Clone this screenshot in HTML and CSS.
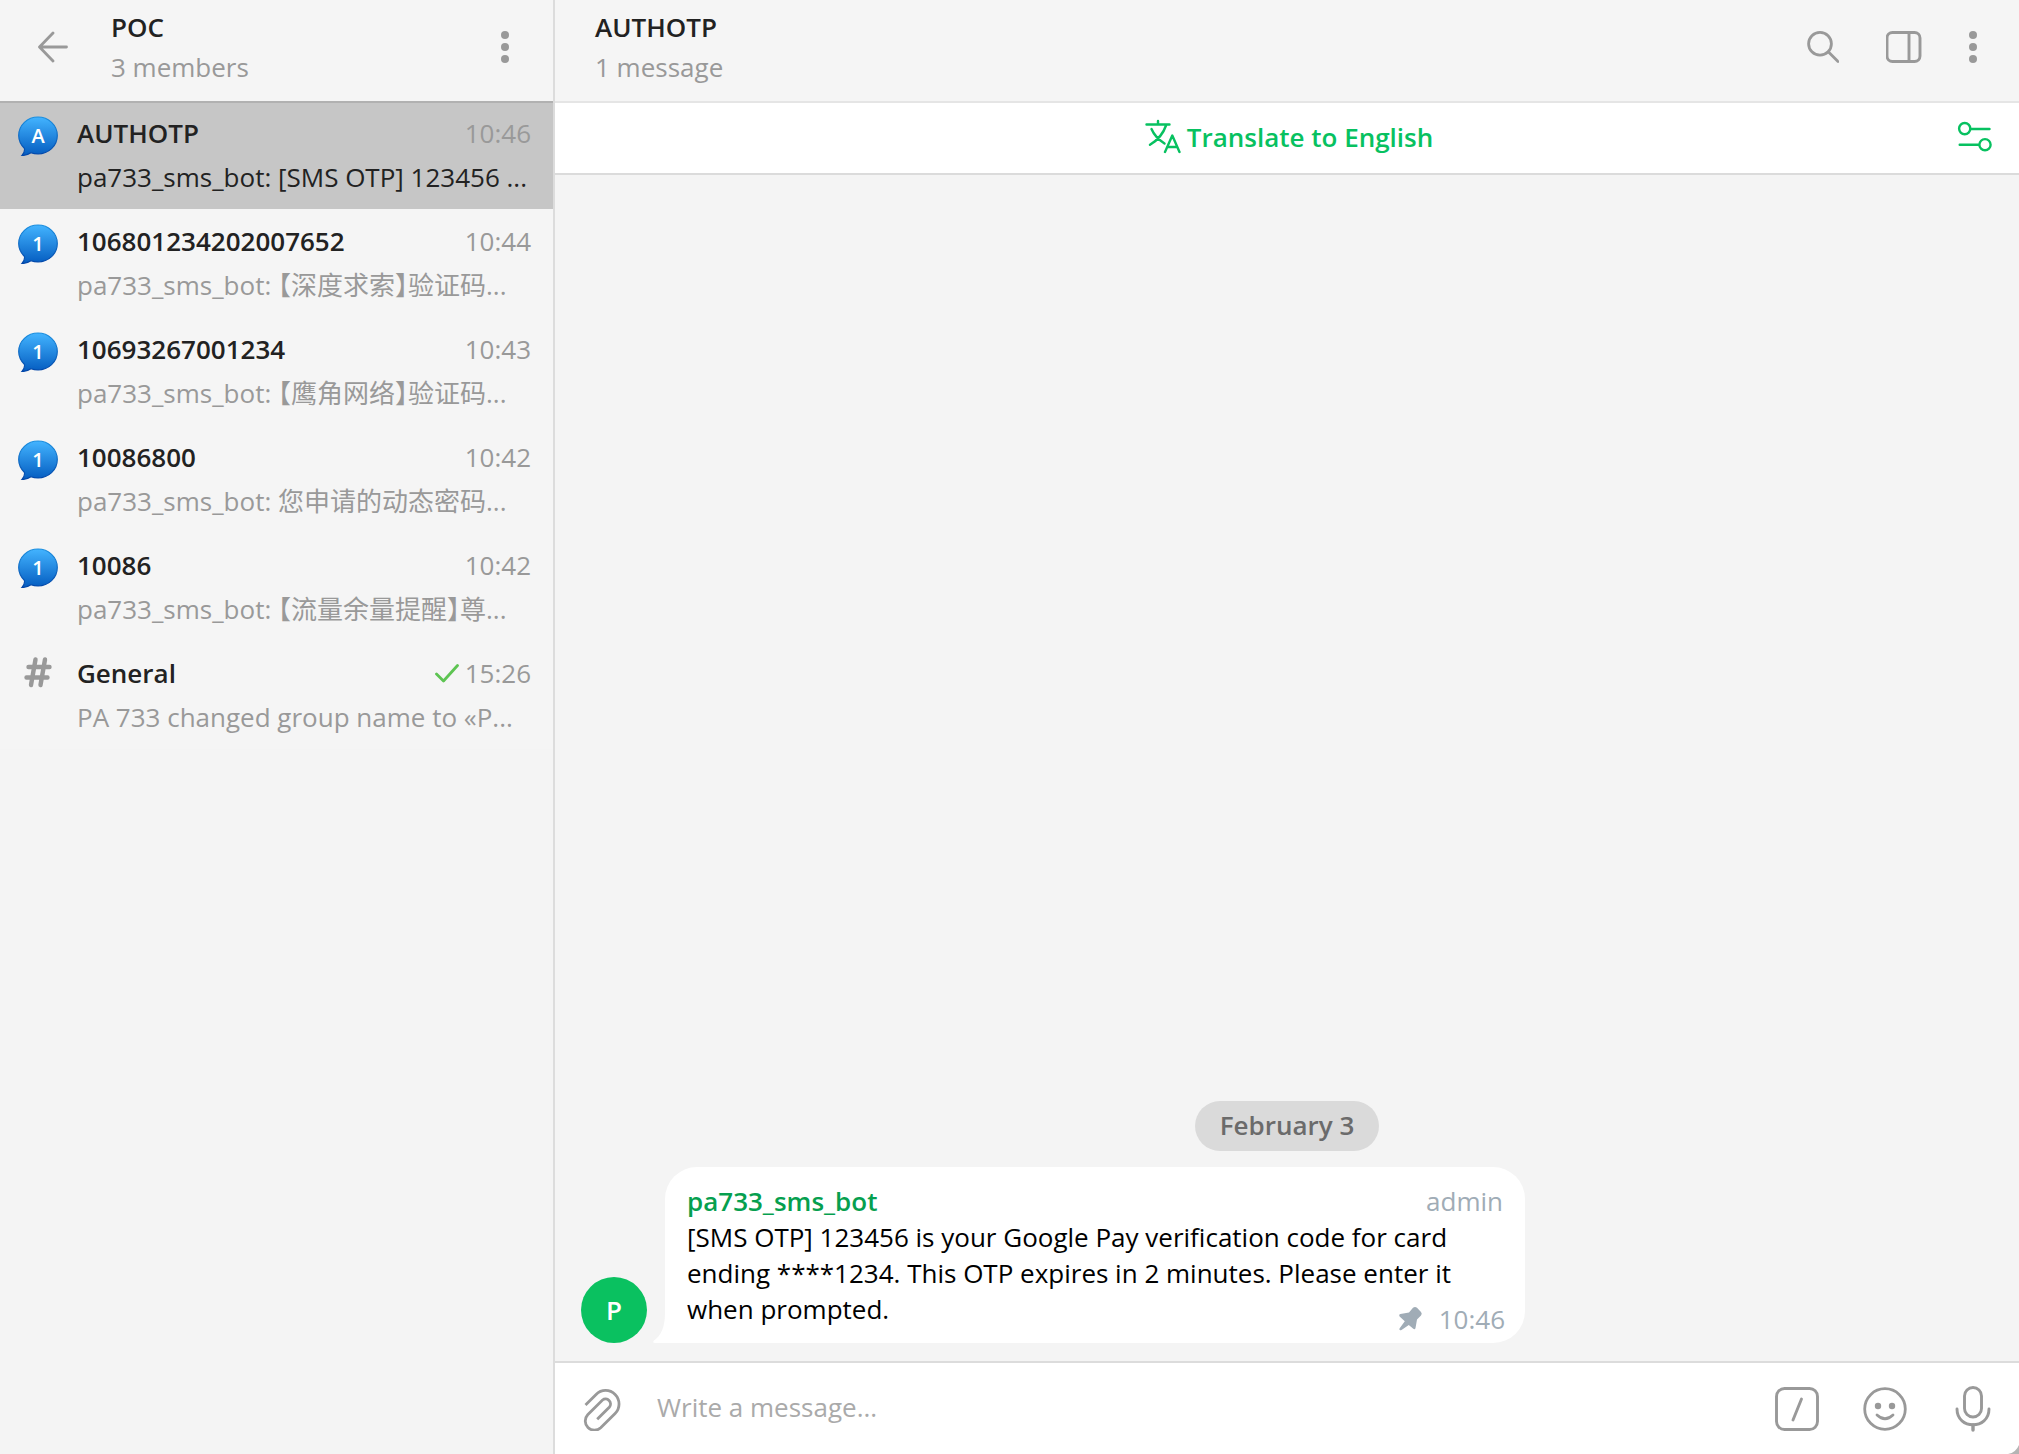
FILE: index.html
```html
<!DOCTYPE html>
<html lang="en">
<head>
<meta charset="utf-8">
<meta name="viewport" content="width=device-width, initial-scale=1">
<title>POC – AUTHOTP</title>
<link rel="stylesheet" href="styles.css">
</head>
<body>
<svg class="defs" aria-hidden="true">
  <defs>
    <linearGradient id="topic-fill" x1="0" y1="0" x2="0" y2="1">
      <stop offset="0" stop-color="#43b4ff"/>
      <stop offset="1" stop-color="#045cc0"/>
    </linearGradient>
    <linearGradient id="topic-edge" x1="0" y1="0" x2="0" y2="1">
      <stop offset="0" stop-color="#1b8fe0"/>
      <stop offset="1" stop-color="#0346a8"/>
    </linearGradient>
    <symbol id="topic" viewBox="0 0 40 40">
      <path d="M20 1C30.500 1 39.300 9 39.300 19.500C39.300 30 30.500 38 20 38C17.500 38 15 37.600 13 36.800C10.500 38.600 7.500 39.400 4 39.500C6 37.500 6.800 35 6.500 32.500C3 29 .700 24.500 .700 19.500C.700 9 9.500 1 20 1Z" fill="url(#topic-fill)" stroke="url(#topic-edge)" stroke-width="1.200"/>
    </symbol>
  </defs>
</svg>
<div class="app">
  <aside class="sidebar">
    <header class="bar sidebar-bar">
      <button class="icon-btn" aria-label="Back">
        <svg width="30" height="32" viewBox="0 0 30 32"><path d="M28.500 16H2M15 2L1.500 16L15 30" fill="none" stroke="#999" stroke-width="2.800" stroke-linecap="round" stroke-linejoin="round"/></svg>
      </button>
      <div class="titles">
        <h1 class="title">POC</h1>
        <p class="subtitle">3 members</p>
      </div>
      <button class="icon-btn" aria-label="Group menu">
        <svg width="8" height="32" viewBox="0 0 8 32" fill="#999"><circle cx="4" cy="4" r="4"/><circle cx="4" cy="16" r="4"/><circle cx="4" cy="28" r="4"/></svg>
      </button>
    </header>
    <nav aria-label="Topics">
      <ul class="topics">
        <li><a class="topic topic-active" href="#authotp">
          <svg class="topic-icon" viewBox="0 0 40 40"><use href="#topic"/><text class="topic-letter" x="20" y="27">A</text></svg>
          <span class="topic-name">AUTHOTP</span><span class="topic-time">10:46</span>
          <span class="topic-preview">pa733_sms_bot: [SMS OTP] 123456 ...</span>
        </a></li>
        <li><a class="topic" href="#106801234202007652">
          <svg class="topic-icon" viewBox="0 0 40 40"><use href="#topic"/><text class="topic-letter" x="20" y="27">1</text></svg>
          <span class="topic-name">106801234202007652</span><span class="topic-time">10:44</span>
          <span class="topic-preview" lang="zh-CN">pa733_sms_bot: 【深度求索】验证码...</span>
        </a></li>
        <li><a class="topic" href="#10693267001234">
          <svg class="topic-icon" viewBox="0 0 40 40"><use href="#topic"/><text class="topic-letter" x="20" y="27">1</text></svg>
          <span class="topic-name">10693267001234</span><span class="topic-time">10:43</span>
          <span class="topic-preview" lang="zh-CN">pa733_sms_bot: 【鹰角网络】验证码...</span>
        </a></li>
        <li><a class="topic" href="#10086800">
          <svg class="topic-icon" viewBox="0 0 40 40"><use href="#topic"/><text class="topic-letter" x="20" y="27">1</text></svg>
          <span class="topic-name">10086800</span><span class="topic-time">10:42</span>
          <span class="topic-preview" lang="zh-CN">pa733_sms_bot: 您申请的动态密码...</span>
        </a></li>
        <li><a class="topic" href="#10086">
          <svg class="topic-icon" viewBox="0 0 40 40"><use href="#topic"/><text class="topic-letter" x="20" y="27">1</text></svg>
          <span class="topic-name">10086</span><span class="topic-time">10:42</span>
          <span class="topic-preview" lang="zh-CN">pa733_sms_bot: 【流量余量提醒】尊...</span>
        </a></li>
        <li><a class="topic" href="#general">
          <svg class="topic-icon" viewBox="0 0 40 40"><path d="M17.500 3.500L13 29M27 3.500L22.500 29M10.500 11H31.500M8.500 21.500H29.500" fill="none" stroke="#999" stroke-width="4.400" stroke-linecap="round"/></svg>
          <span class="topic-name">General</span><span class="topic-time"><svg class="check" width="24" height="20" viewBox="0 0 24 20"><path d="M1.500 11L8.500 18L22.500 2.500" fill="none" stroke="#5dc452" stroke-width="2.800" stroke-linecap="round" stroke-linejoin="round"/></svg>15:26</span>
          <span class="topic-preview">PA 733 changed group name to «P...</span>
        </a></li>
      </ul>
    </nav>
  </aside>

  <main class="chat">
    <header class="bar chat-bar">
      <div class="titles">
        <h2 class="title">AUTHOTP</h2>
        <p class="subtitle">1 message</p>
      </div>
      <button class="icon-btn" aria-label="Search">
        <svg width="32" height="32" viewBox="0 0 32 32"><g fill="none" stroke="#999" stroke-width="2.800" stroke-linecap="round"><circle cx="13" cy="12.800" r="11.400"/><path d="M21.500 21L31 30.500"/></g></svg>
      </button>
      <button class="icon-btn" aria-label="Toggle side panel">
        <svg width="36" height="32" viewBox="0 0 36 32"><g fill="none" stroke="#999" stroke-width="2.900"><rect x="1" y="1.500" width="33" height="29" rx="5.500"/><path d="M23 2V30"/></g></svg>
      </button>
      <button class="icon-btn" aria-label="Topic menu">
        <svg width="8" height="32" viewBox="0 0 8 32" fill="#999"><circle cx="4" cy="4" r="4"/><circle cx="4" cy="16" r="4"/><circle cx="4" cy="28" r="4"/></svg>
      </button>
    </header>

    <div class="translate-bar">
      <button class="translate">
        <svg width="36" height="36" viewBox="0 0 36 36"><path d="M1.500 5.500H24.500M13 2V5M6.500 10C9 16 14 21 19.500 24.500M21 6.500C18 15.500 12 21.500 5 25.800M20 33L27.300 16.500L34.500 33M22.500 28H32" fill="none" stroke="#07c160" stroke-width="2.400" stroke-linecap="round" stroke-linejoin="round"/></svg>
        Translate to English
      </button>
      <button class="icon-btn translate-options" aria-label="Translation settings">
        <svg width="36" height="36" viewBox="0 0 36 36"><g fill="none" stroke="#07c160" stroke-width="2.400" stroke-linecap="round"><circle cx="7.700" cy="9.600" r="5.600"/><path d="M14 10H32.500M2.700 25.700H21.500"/><circle cx="28" cy="25.700" r="5.600"/></g></svg>
      </button>
    </div>

    <section class="history" aria-label="Messages">
      <p class="date">February 3</p>
      <article class="message">
        <span class="avatar">P</span>
        <div class="bubble">
          <svg class="tail" width="14" height="30" viewBox="0 0 14 30"><path d="M13 0C13 14 9 23 2 27.500Q0 30 3 30H14V0Z" fill="#fff"/></svg>
          <div class="bubble-head"><span class="sender">pa733_sms_bot</span><span class="role">admin</span></div>
          <p class="bubble-text">[SMS OTP] 123456 is your Google Pay verification code for card ending ****1234. This OTP expires in 2 minutes. Please enter it when prompted.
            <span class="meta">
              <svg width="26" height="26" viewBox="0 0 26 26"><path d="M16 1.800Q18 .200 20 1.800L24 6Q25.500 7.500 24 9.500L20 13.500L18.500 22Q18 24 16.300 22.800L11.800 19L4.500 24Q1.800 25 2.500 22.500L7.800 15.300L2.600 10.500Q1.500 8.500 3.500 8L12 6.500Z" fill="#a0acb6"/></svg>
              <time>10:46</time>
            </span>
          </p>
        </div>
      </article>
    </section>

    <form class="composer">
      <button type="button" class="icon-btn" aria-label="Attach file">
        <svg width="38" height="44" viewBox="0 0 38 44"><path d="M2.500 18L13.100 7.400A13.400 13.400 0 0 1 32.100 26.400L17.700 40.800A9.200 9.200 0 0 1 4.700 27.800L19.500 13A5 5 0 0 1 26.500 20L14.200 32.300" fill="none" stroke="#999" stroke-width="2.800"/></svg>
      </button>
      <input class="composer-input" type="text" placeholder="Write a message..." aria-label="Write a message">
      <button type="button" class="icon-btn" aria-label="Bot commands">
        <svg width="44" height="44" viewBox="0 0 44 44"><g fill="none" stroke="#999" stroke-width="2.900" stroke-linecap="round"><rect x="1.500" y="1.500" width="41" height="41" rx="8"/><path d="M26.500 12L18 33"/></g></svg>
      </button>
      <button type="button" class="icon-btn" aria-label="Emoji">
        <svg width="44" height="44" viewBox="0 0 44 44"><g fill="none" stroke="#999" stroke-width="2.800" stroke-linecap="round"><circle cx="22" cy="22" r="20.300"/><path d="M14 28Q22 35.500 30 28"/></g><circle cx="15" cy="19" r="3.200" fill="#999"/><circle cx="29" cy="19" r="3.200" fill="#999"/></svg>
      </button>
      <button type="button" class="icon-btn" aria-label="Record voice message">
        <svg width="44" height="46" viewBox="0 0 44 46"><g fill="none" stroke="#999" stroke-width="2.900" stroke-linecap="round"><rect x="13.500" y="1.500" width="17" height="29.500" rx="8.500"/><path d="M6 23C6 44 38 44 38 23"/><path d="M22 39V44" stroke-width="3.400"/></g></svg>
      </button>
    </form>
  </main>
</div>
<svg class="window-corner" width="12" height="10" viewBox="0 0 12 10" aria-hidden="true"><path d="M12 1V10H1Q9 8.500 12 1Z" fill="#b4b4b4"/></svg>
</body>
</html>
```
FILE: styles.css
```css
* {
  box-sizing: border-box;
  margin: 0;
  padding: 0;
}

body {
  font: 26px/36px "Open Sans", "Noto Sans CJK SC", sans-serif;
  color: #222;
  background: #f4f4f4;
}

svg {
  display: block;
  flex: none;
}

button,
input {
  font: inherit;
  color: inherit;
  background: none;
  border: 0;
}

.defs {
  position: absolute;
  width: 0;
  height: 0;
}

.app {
  display: flex;
  min-height: 100vh;
}

.sidebar {
  flex: 0 0 555px;
  border-right: 2px solid #dcdcdc;
}

/* Header bars cast a translucent hairline over what follows them */
.bar {
  position: relative;
  z-index: 1;
  display: flex;
  align-items: center;
  padding-top: 9px;
  padding-bottom: 16px;
  background: #f5f5f5;
  box-shadow: 0 2px 0 rgba(0, 0, 0, 0.1);
}

.sidebar-bar {
  gap: 43px;
  padding-left: 38px;
  padding-right: 44px;
}

.chat-bar {
  gap: 47px;
  padding-left: 40px;
  padding-right: 42px;
}

.titles {
  display: grid;
  flex: 1;
  gap: 4px;
}

.title {
  font-size: 26px;
  font-weight: 600;
}

.subtitle {
  color: #999;
}

.topics {
  list-style: none;
}

.topic {
  display: grid;
  grid-template-columns: 60px 1fr auto;
  row-gap: 8px;
  padding: 14px 22px 14px 17px;
  color: #222;
  text-decoration: none;
  background: #f5f5f5;
}

.topic-active {
  background: #c6c6c6;
}

.topic-icon {
  grid-row: 1 / 3;
  width: 40px;
  height: 40px;
  margin: 1px;
}

.topic-letter {
  font-size: 20px;
  font-weight: 600;
  fill: #fff;
  text-anchor: middle;
}

.topic-name {
  font-weight: 600;
}

.topic-time {
  display: flex;
  align-items: center;
  gap: 6px;
  color: #999;
}

.topic-preview {
  grid-column: 2 / 4;
  height: 36px;
  overflow: hidden;
  white-space: nowrap;
  color: #999;
  font-feature-settings: "halt";
}

.topic-active .topic-preview {
  color: #222;
}

.chat {
  display: flex;
  flex: 1;
  flex-direction: column;
  min-width: 0;
}

.translate-bar {
  display: grid;
  grid-template-columns: 1fr auto 1fr;
  align-items: center;
  padding: 18px 26px 18px 30px;
  background: #fff;
  box-shadow: 0 2px 0 rgba(0, 0, 0, 0.1);
}

.translate {
  display: flex;
  grid-column: 2;
  gap: 6px;
  font-weight: 600;
  color: #07c160;
}

.translate-options {
  justify-self: end;
}

.history {
  display: flex;
  flex: 1;
  flex-direction: column;
  justify-content: flex-end;
  gap: 16px;
  padding: 18px 26px;
}

.date {
  align-self: center;
  padding: 6px 25px 8px;
  font-weight: 600;
  color: #6b6b6b;
  background: #dadada;
  border-radius: 25px;
}

.message {
  display: flex;
  align-items: flex-end;
  gap: 18px;
}

.avatar {
  flex: none;
  width: 66px;
  height: 66px;
  font-weight: 600;
  line-height: 66px;
  color: #fff;
  text-align: center;
  background: #0ac160;
  border-radius: 50%;
}

.bubble {
  position: relative;
  flex: 0 1 860px;
  padding: 16px 22px;
  color: #000;
  background: #fff;
  border-radius: 32px 32px 32px 0;
}

.tail {
  position: absolute;
  bottom: 0;
  left: -13px;
}

.bubble-head {
  display: flex;
  justify-content: space-between;
}

.sender {
  font-weight: 600;
  color: #069f4f;
}

.role,
.meta {
  color: #a0acb6;
}

/* Sits beside the last line of text and hangs into the bubble's padding */
.meta {
  float: right;
  display: flex;
  align-items: center;
  gap: 16px;
  margin: 10px -2px -10px 16px;
}

.composer {
  display: flex;
  align-items: center;
  gap: 44px;
  height: 93px;
  padding: 0 24px 0 28px;
  background: #fff;
  border-top: 2px solid #dcdcdc;
}

.composer-input {
  flex: 1;
  min-width: 0;
  height: 40px;
  padding-bottom: 4px;
  margin-left: -8px;
  outline: 0;
}

.composer-input::placeholder {
  color: #aaa;
  opacity: 1;
}

.window-corner {
  position: fixed;
  right: 0;
  bottom: 0;
}
```
